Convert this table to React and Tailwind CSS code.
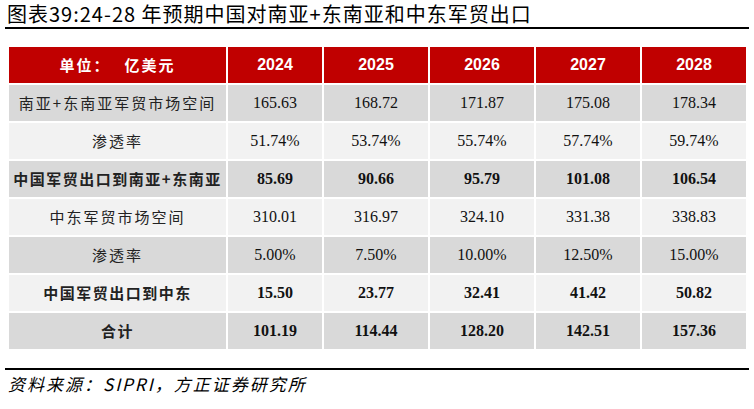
const years = ["2024", "2025", "2026", "2027", "2028"];

const rows = [
  { label: "南亚+东南亚军贸市场空间", vals: ["165.63", "168.72", "171.87", "175.08", "178.34"], bg: "bg-[#d9d9d9]" },
  { label: "渗透率", vals: ["51.74%", "53.74%", "55.74%", "57.74%", "59.74%"], bg: "bg-[#f2f2f2]" },
  { label: "中国军贸出口到南亚+东南亚", vals: ["85.69", "90.66", "95.79", "101.08", "106.54"], bg: "bg-[#d9d9d9]", bold: true },
  { label: "中东军贸市场空间", vals: ["310.01", "316.97", "324.10", "331.38", "338.83"], bg: "bg-[#f2f2f2]" },
  { label: "渗透率", vals: ["5.00%", "7.50%", "10.00%", "12.50%", "15.00%"], bg: "bg-[#d9d9d9]" },
  { label: "中国军贸出口到中东", vals: ["15.50", "23.77", "32.41", "41.42", "50.82"], bg: "bg-[#f2f2f2]", bold: true },
  { label: "合计", vals: ["101.19", "114.44", "128.20", "142.51", "157.36"], bg: "bg-[#d9d9d9]", bold: true },
];

export default function App() {
  return (
    <div className="w-[754px] h-[409px] bg-white font-['Noto_Sans_CJK_SC',sans-serif]">
      {/* title */}
      <div className="pl-[7px] pt-[1px] h-[27px] text-[20px] leading-[25px] text-black tracking-[1px] whitespace-nowrap">
        图表39:24-28 年预期中国对南亚+东南亚和中东军贸出口
      </div>
      <div className="mx-[5px] h-[2px] bg-black" />

      {/* table */}
      <div className="ml-[9px] mt-[18px] grid grid-cols-[217px_94px_104px_104px_104px_104px] gap-[2px] w-[737px]">
        <div className="h-[36px] bg-[#c00000] text-white font-bold text-[15px] flex items-center justify-center tracking-[2px]">
          单位：<span className="ml-[14px]">亿美元</span>
        </div>
        {years.map((y) => (
          <div
            key={y}
            className="h-[36px] bg-[#c00000] text-white font-bold text-[16px] flex items-center justify-center font-['Liberation_Sans',Arial,sans-serif]"
          >
            {y}
          </div>
        ))}

        {rows.map((r, i) => (
          <Row key={i} r={r} />
        ))}
      </div>

      <div className="mx-[5px] mt-[19px] h-[2px] bg-black" />
      <div className="pl-[8px] pt-[3px] text-[17px] leading-[22px] italic text-black tracking-[2px]">
        资料来源：SIPRI，方正证券研究所
      </div>
    </div>
  );
}

function Row({ r }) {
  return (
    <>
      <div
        className={`h-[36px] ${r.bg} flex items-center justify-center text-[15px] text-[#222] ${r.bold ? "font-bold tracking-[1.5px]" : "tracking-[2px]"}`}
      >
        {r.label}
      </div>
      {r.vals.map((v, j) => (
        <div
          key={j}
          className={`h-[36px] ${r.bg} flex items-center justify-center text-[16px] text-[#111] font-['Liberation_Serif','Times_New_Roman',serif] ${r.bold ? "font-bold" : ""}`}
        >
          {v}
        </div>
      ))}
    </>
  );
}
